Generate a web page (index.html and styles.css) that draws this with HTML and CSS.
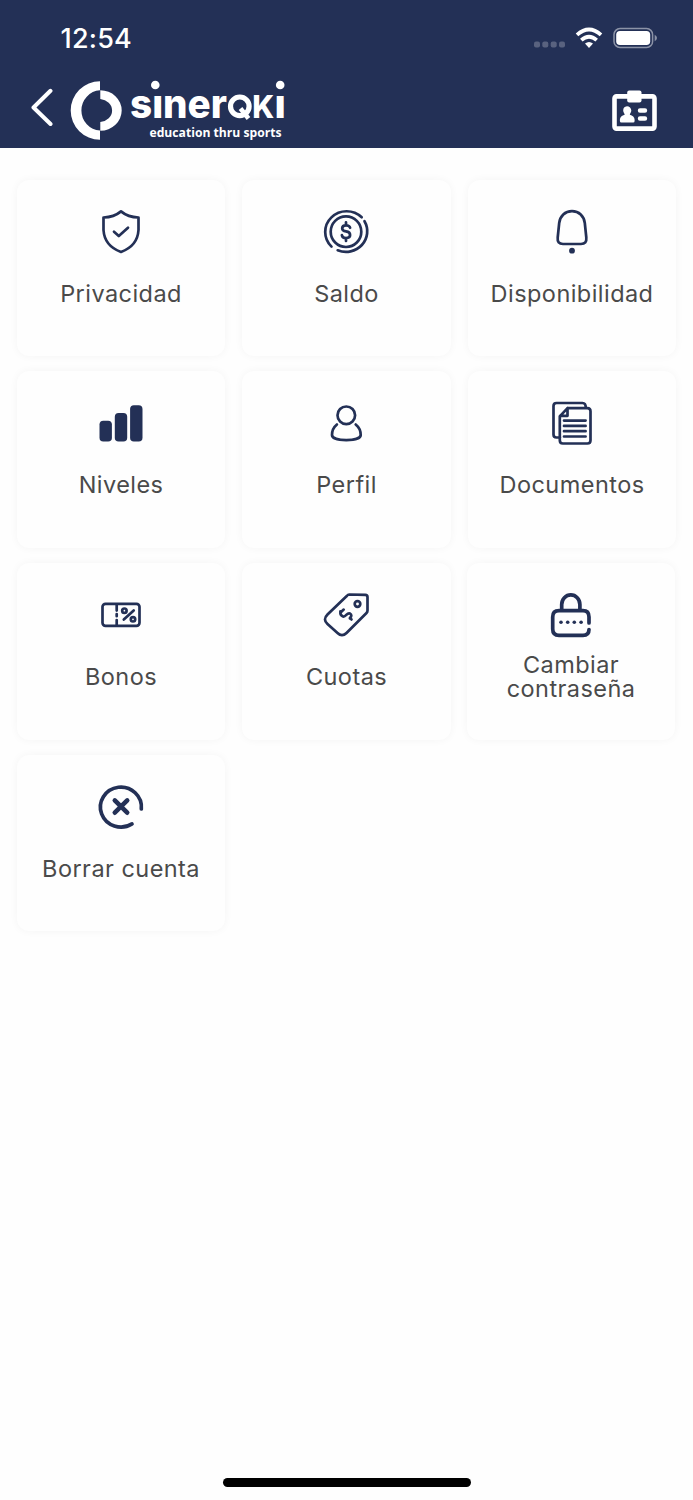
FILE: index.html
```html
<!DOCTYPE html>
<html lang="es">
<head>
<meta charset="utf-8">
<title>Sinerqki</title>
<link rel="stylesheet" href="styles.css">
</head>
<body>
<header class="header">
  <div class="status">
    <span class="clock">12:54</span>
    <svg class="status-icons" width="126" height="26" viewBox="0 0 126 26">
      <g fill="#59627f"><rect x="2" y="15.5" width="6" height="6" rx="2"/><rect x="10.3" y="15.5" width="6" height="6" rx="2"/><rect x="18.7" y="15.5" width="6" height="6" rx="2"/><rect x="27" y="15.5" width="6" height="6" rx="2"/></g>
      <g fill="none" stroke="#fff" stroke-width="3.8"><path d="M45 8.8Q57 -1.8 69 8.8"/><path d="M49.3 14.2Q57 7.4 64.7 14.2"/></g>
      <path d="M53 17.6Q57 14.4 61 17.6L57 22Z" fill="#fff"/>
      <rect x="82" y="2.6" width="38.6" height="18.8" rx="6" fill="none" stroke="#8c93a7" stroke-width="1.5"/>
      <rect x="84.2" y="5" width="34" height="14" rx="3.8" fill="#fff"/>
      <path d="M122.7 8.8Q125 10 125 12T122.7 15.2Z" fill="#8c93a7"/>
    </svg>
  </div>
  <div class="nav">
    <svg class="back" width="24" height="40" viewBox="0 0 24 40" fill="none" stroke="#fff" stroke-width="4" stroke-linecap="round" stroke-linejoin="round"><path d="M20.5 2.8L3.5 19.5L20.5 36"/></svg>
    <svg class="logo" width="218" height="64" viewBox="0 0 218 64" fill="#fff">
      <path d="M30 2.2A29.3 29.3 0 0 0 30 60.8V51.6A20 20.2 0 0 1 30 11.3Z"/>
      <path d="M30.3 11.3A21.4 20.2 0 0 1 30.3 51.7V43A13 11.6 0 0 0 30.3 19.9Z"/>
      <text class="wordmark" x="60" y="38.6" textLength="97" lengthAdjust="spacingAndGlyphs">sıner</text>
      <text class="wordmark cap" x="182.3" y="38.6" textLength="22" lengthAdjust="spacingAndGlyphs">K</text>
      <text class="wordmark" x="204.6" y="38.6">ı</text>
      <circle cx="85.3" cy="6" r="4.3"/><circle cx="210.2" cy="6" r="4.3"/>
      <circle cx="169.8" cy="27.3" r="9.3" fill="none" stroke="#fff" stroke-width="5.2"/>
      <path d="M170.5 29.5L178.5 39.5" stroke="#fff" stroke-width="4.6"/>
      <text class="tagline" x="79.5" y="58" textLength="132" lengthAdjust="spacingAndGlyphs">education thru sports</text>
    </svg>
    <svg class="badge" width="46" height="42" viewBox="0 0 46 42">
      <rect x="2.5" y="6.4" width="40" height="32.2" rx="2" fill="none" stroke="#fff" stroke-width="4.6"/>
      <rect x="15.2" y=".5" width="14.3" height="12" rx="2" fill="#fff"/>
      <path d="M15 16.2a4.3 4.3 0 0 1 4.3 4.3c0 2-1.3 2.7-1.5 4.2 2.8.8 4.8 2.4 4.8 5v1.3q0 1.5-1.5 1.5H9.4q-1.5 0-1.5-1.5v-1.3c0-2.6 2-4.2 4.8-5-.2-1.5-1.5-2.2-1.5-4.2A4.3 4.3 0 0 1 15 16.2Z" fill="#fff"/>
      <path d="M28 20.5h5M28 28.5h5" stroke="#fff" stroke-width="4.4" stroke-linecap="round"/>
    </svg>
  </div>
</header>
<main class="grid">
  <section class="card">
    <svg class="icon" viewBox="0 0 48 48"><path d="M24 3.4Q17 9.3 6.5 9.5V22Q7.5 38 24 43.9Q40.5 38 41.5 22V9.5Q31 9.3 24 3.4ZM17 23.7L21.8 28L31 19.7"/></svg>
    <p class="label">Privacidad</p>
  </section>
  <section class="card">
    <svg class="icon" viewBox="0.5 0 48 48"><circle cx="23.5" cy="23.7" r="15.3"/><path d="M9 38.6A21.3 20.6 0 0 1 39.2 9.3M42 13.2A21.3 20.6 0 0 1 15.2 42.3"/><path d="M27.6 19.8Q27 17.3 23.5 17.3Q19.7 17.3 19.7 20.2Q19.7 22.8 23.5 23.4Q27.6 24 27.6 27Q27.6 30 23.5 30Q19.8 30 19.4 27.2M23.5 14.3V17M23.5 30V33"/></svg>
    <p class="label">Saldo</p>
  </section>
  <section class="card">
    <svg class="icon" viewBox="0 0 48 48"><path d="M24 3.1C31 3.1 36 8 36.8 15L38.3 29.5Q39 36 33 36H15Q9 36 9.7 29.5L11.2 15C12 8 17 3.1 24 3.1Z"/><circle class="solid" cx="24" cy="42.7" r="2.9"/></svg>
    <p class="label">Disponibilidad</p>
  </section>
  <section class="card">
    <svg class="icon" viewBox="0 -0.5 48 48"><g class="solid"><rect x="2.5" y="21.2" width="12.4" height="20.8" rx="3.8"/><rect x="17.8" y="13.4" width="12.4" height="28.6" rx="3.8"/><rect x="33.1" y="5.7" width="12.4" height="36.3" rx="3.8"/></g></svg>
    <p class="label">Niveles</p>
  </section>
  <section class="card">
    <svg class="icon" viewBox="0.5 -0.5 48 48"><circle cx="23.8" cy="15.8" r="8.8"/><path d="M14.4 25Q9.5 29 9.5 35.5C9.5 38.8 16 40.6 23.8 40.6S38.2 38.8 38.2 35.5Q38.2 29 33.2 25"/></svg>
    <p class="label">Perfil</p>
  </section>
  <section class="card">
    <svg class="icon" viewBox="0 -0.3 48 48"><path d="M12 38.2H8.5Q5.5 38.2 5.5 35.2V6.7Q5.5 3.7 8.5 3.7H34.5Q37.8 3.7 37.8 8.4M19.5 8.8H39.4Q42.5 8.8 42.5 12V41Q42.5 44.2 39.4 44.2H14.8Q11.8 44.2 11.8 41V17L19.5 8.8V16.5H12M16 21.3H37.6M16 26.6H37.6M16 31.9H37.6M16 37.2H37.6"/></svg>
    <p class="label">Documentos</p>
  </section>
  <section class="card">
    <svg class="icon" viewBox="0 0 48 48"><rect x="5.5" y="12.8" width="37" height="22" rx="3"/><path d="M19.7 14V19.6M19.7 23V25.2M19.7 29V34M26.8 28.6L36.7 19.4"/><circle cx="27.4" cy="19.7" r="2.2"/><circle cx="36" cy="28.3" r="2.2"/></svg>
    <p class="label">Bonos</p>
  </section>
  <section class="card">
    <svg class="icon" viewBox="0.5 0 48 48"><path d="M26.7 3.5L42.8 3.8Q45 3.9 45 6V19.5Q45 21 44 22L24 42Q19.5 46.4 15 42L5 33Q0 28.5 5 23.5L24 5.3Q25.5 3.5 26.7 3.5Z"/><circle cx="35" cy="13" r="2.8"/><path d="M17.9 20.4Q17.5 24.5 20.5 25.5C23.5 26.3 24.2 21.3 27.3 22.4Q30.3 24.2 27.4 27.4M18.6 21L21.2 18.6M27.6 26.6L29 28.5"/></svg>
    <p class="label">Cuotas</p>
  </section>
  <section class="card password-card">
    <svg class="icon heavy" viewBox="0 0 48 48"><path d="M42 32V26Q42 19.7 36 19.7H12Q5.7 19.7 5.7 26V38Q5.7 44.3 12 44.3H36Q42 44.3 42 38.5M14.7 19V13.4A9.1 9.5 0 0 1 32.9 13.4V19"/><g class="solid"><circle cx="14" cy="31.3" r="1.8"/><circle cx="20.7" cy="31.3" r="1.8"/><circle cx="27.3" cy="31.3" r="1.8"/><circle cx="34.1" cy="31.3" r="1.8"/></g></svg>
    <p class="label password">Cambiar<br>contraseña</p>
  </section>
  <section class="card">
    <svg class="icon heavy" viewBox="0 0.3 48 48"><path d="M44.3 26.3A20.5 20 0 1 0 35 41.2"/><path class="cross" d="M17.8 17.7L30.2 30M30.2 17.7L17.8 30"/></svg>
    <p class="label">Borrar cuenta</p>
  </section>
</main>
<footer class="home-area"><div class="home-bar"></div></footer>
</body>
</html>
```
FILE: styles.css
```css
* { box-sizing: border-box; }
body {
  margin: 0;
  width: 693px;
  height: 1500px;
  display: flex;
  flex-direction: column;
  background: #fefefe;
  font-family: Inter, "Liberation Sans", sans-serif;
}
.header { height: 147.5px; background: #233056; color: #fff; }
.status { height: 77px; padding: 26px 35px 0 60.5px; display: flex; justify-content: space-between; }
.clock { font-size: 27px; line-height: 26px; font-weight: 500; letter-spacing: 0.2px; }
.status-icons { display: block; }
.nav { display: flex; padding: 0 35px 0 30px; }
.back { margin-top: 11px; flex: none; }
.logo { margin: 2px 0 0 16px; flex: none; overflow: visible; }
.badge { margin: 13px 0 0 auto; flex: none; }
.wordmark { font: 800 40px Inter, sans-serif; }
.cap { font-size: 31px; }
.tagline { font: 700 13px "Open Sans", sans-serif; }
.grid {
  flex: 1;
  display: grid;
  grid-template-columns: repeat(3, 208.5px);
  grid-auto-rows: 176.6px;
  gap: 15px 17px;
  align-content: start;
  padding: 32.3px 0 0 16.8px;
}
.card {
  display: flex;
  flex-direction: column;
  align-items: center;
  padding-top: 28px;
  border-radius: 12px;
  background: #fefefe;
  box-shadow: 0 0 9px rgba(0, 0, 0, 0.045);
}
.password-card { margin: 0 1px 0 -1px; }
.icon { width: 48px; height: 48px; flex: none; fill: none; stroke: #233056; stroke-width: 2.7; stroke-linecap: round; stroke-linejoin: round; overflow: visible; }
.heavy { stroke-width: 3.7; }
.cross { stroke-width: 4.6; }
.solid { fill: #233056; stroke: none; }
.label {
  height: 76px;
  margin: 0;
  display: flex;
  align-items: center;
  justify-content: center;
  color: #4a4a4a;
  font-size: 23.5px;
  font-weight: 400;
  line-height: 24px;
  letter-spacing: 0.45px;
  white-space: nowrap;
}
.password { display: block; padding-top: 14px; text-align: center; }
.home-area { height: 22px; display: flex; justify-content: center; }
.home-bar { width: 248px; height: 8.5px; border-radius: 5px; background: #000; }
```
